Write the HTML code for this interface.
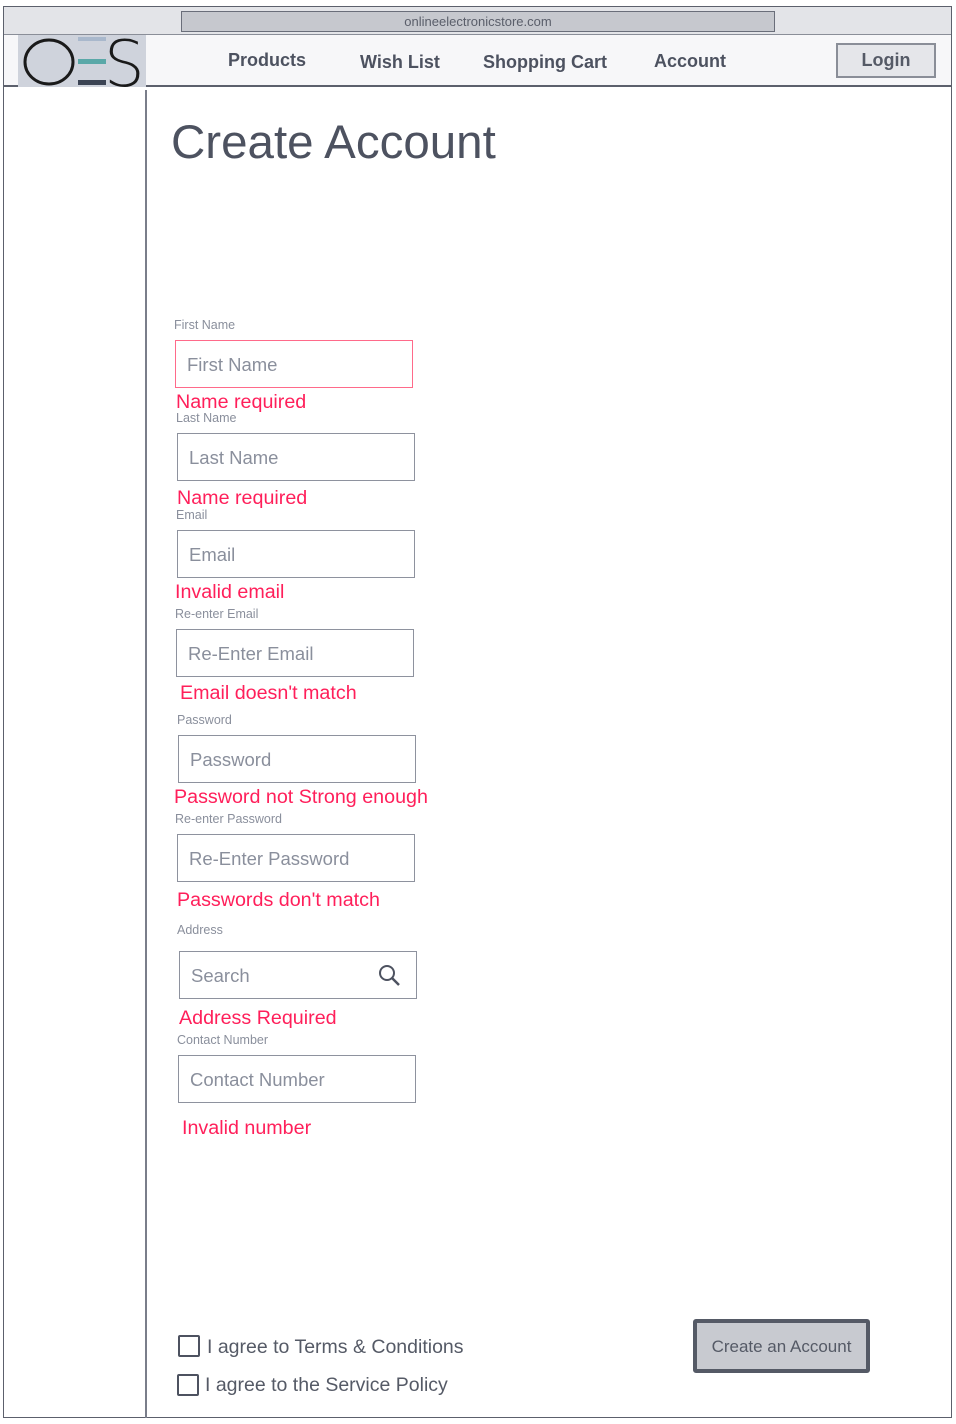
<!DOCTYPE html>
<html><head><meta charset="utf-8"><style>
*{margin:0;padding:0;box-sizing:border-box}
body{width:956px;height:1424px;background:#fff;position:relative;font-family:"Liberation Sans",sans-serif;overflow:hidden}
.a{position:absolute}
.lbl{position:absolute;font-size:12.5px;color:#8a8f9c}
.in{position:absolute;width:238px;height:48px;border:1.5px solid #8e929e;background:#fff;font-size:18.5px;color:#8a8f9c;padding:13px 0 0 11px}
.err{position:absolute;font-size:19.7px;color:#ff1f5a;margin-top:1px}
.nav{position:absolute;top:50px;font-size:18px;font-weight:bold;color:#4d5260}
.cb{position:absolute;width:22px;height:22px;border:2px solid #4d5260;border-radius:2px}
.ct{position:absolute;font-size:19.5px;color:#555a66;margin-top:1px}
</style></head><body>
<div class="a" style="left:3px;top:6px;width:949px;height:1412px;border:1.5px solid #5c606c;background:#fff"></div>
<div class="a" style="left:4px;top:7px;width:947px;height:28px;background:#e3e4e8;border-bottom:1px solid #8a8e98"></div>
<div class="a" style="left:181px;top:11px;width:594px;height:21px;background:#c6c8ce;border:1px solid #6a6e7a;font-size:13px;color:#5a5e6a;text-align:center;line-height:20px">onlineelectronicstore.com</div>
<div class="a" style="left:4px;top:35px;width:947px;height:52px;background:#f7f7f9;border-bottom:2px solid #5c606c"></div>
<div class="a" style="left:18px;top:35px;width:128px;height:52px;background:#cfd3dc"></div>
<svg class="a" style="left:18px;top:35px" width="128" height="52" viewBox="0 0 128 52"><ellipse cx="31" cy="27" rx="24" ry="22" fill="none" stroke="#1a1a1a" stroke-width="3"/><text x="86" y="51" font-family="DejaVu Sans,sans-serif" font-size="64" font-weight="200" fill="#1a1a1a">S</text></svg>
<div class="a" style="left:78px;top:37px;width:28px;height:4px;background:#a9b8cc"></div>
<div class="a" style="left:78px;top:59px;width:28px;height:5px;background:#5aa8a8"></div>
<div class="a" style="left:78px;top:80px;width:28px;height:5px;background:#3c4454"></div>
<div class="nav" style="left:228px">Products</div>
<div class="nav" style="left:360px;top:52px">Wish List</div>
<div class="nav" style="left:483px;top:52px">Shopping Cart</div>
<div class="nav" style="left:654px;top:51px">Account</div>
<div class="a" style="left:836px;top:43px;width:100px;height:35px;border:2px solid #8a8e98;background:#e5e6ea;font-size:18px;font-weight:bold;color:#555a66;text-align:center;line-height:30px">Login</div>
<div class="a" style="left:145px;top:90px;width:2px;height:1328px;background:#7a7e8a"></div>
<div class="a" style="left:171px;top:115px;font-size:47.5px;color:#4d5260">Create Account</div>

<div class="lbl" style="left:174px;top:318px">First Name</div>
<div class="in" style="left:175px;top:340px;border-color:#ff6a8a">First Name</div>
<div class="err" style="left:176px;top:390px">Name required</div>
<div class="lbl" style="left:176px;top:411px">Last Name</div>
<div class="in" style="left:177px;top:433px">Last Name</div>
<div class="err" style="left:177px;top:486px">Name required</div>
<div class="lbl" style="left:176px;top:508px">Email</div>
<div class="in" style="left:177px;top:530px">Email</div>
<div class="err" style="left:175px;top:580px">Invalid email</div>
<div class="lbl" style="left:175px;top:607px">Re-enter Email</div>
<div class="in" style="left:176px;top:629px">Re-Enter Email</div>
<div class="err" style="left:180px;top:681px">Email doesn't match</div>
<div class="lbl" style="left:177px;top:713px">Password</div>
<div class="in" style="left:178px;top:735px">Password</div>
<div class="err" style="left:174px;top:785px">Password not Strong enough</div>
<div class="lbl" style="left:175px;top:812px">Re-enter Password</div>
<div class="in" style="left:177px;top:834px">Re-Enter Password</div>
<div class="err" style="left:177px;top:888px">Passwords don't match</div>
<div class="lbl" style="left:177px;top:923px">Address</div>
<div class="in" style="left:179px;top:951px">Search</div>
<svg class="a" style="left:377px;top:963px" width="26" height="26" viewBox="0 0 26 26"><circle cx="10" cy="10" r="7" fill="none" stroke="#4d5260" stroke-width="2"/><line x1="15" y1="15" x2="22" y2="22" stroke="#4d5260" stroke-width="2.5"/></svg>
<div class="err" style="left:179px;top:1006px">Address Required</div>
<div class="lbl" style="left:177px;top:1033px">Contact Number</div>
<div class="in" style="left:178px;top:1055px">Contact Number</div>
<div class="err" style="left:182px;top:1116px">Invalid number</div>

<div class="cb" style="left:178px;top:1335px"></div>
<div class="ct" style="left:207px;top:1335px">I agree to Terms &amp; Conditions</div>
<div class="cb" style="left:177px;top:1374px"></div>
<div class="ct" style="left:205px;top:1373px">I agree to the Service Policy</div>
<div class="a" style="left:693px;top:1319px;width:177px;height:54px;border:4px solid #555a66;border-radius:3px;background:#c8cad0;font-size:17px;color:#555a66;text-align:center;line-height:48px">Create an Account</div>
</body></html>
